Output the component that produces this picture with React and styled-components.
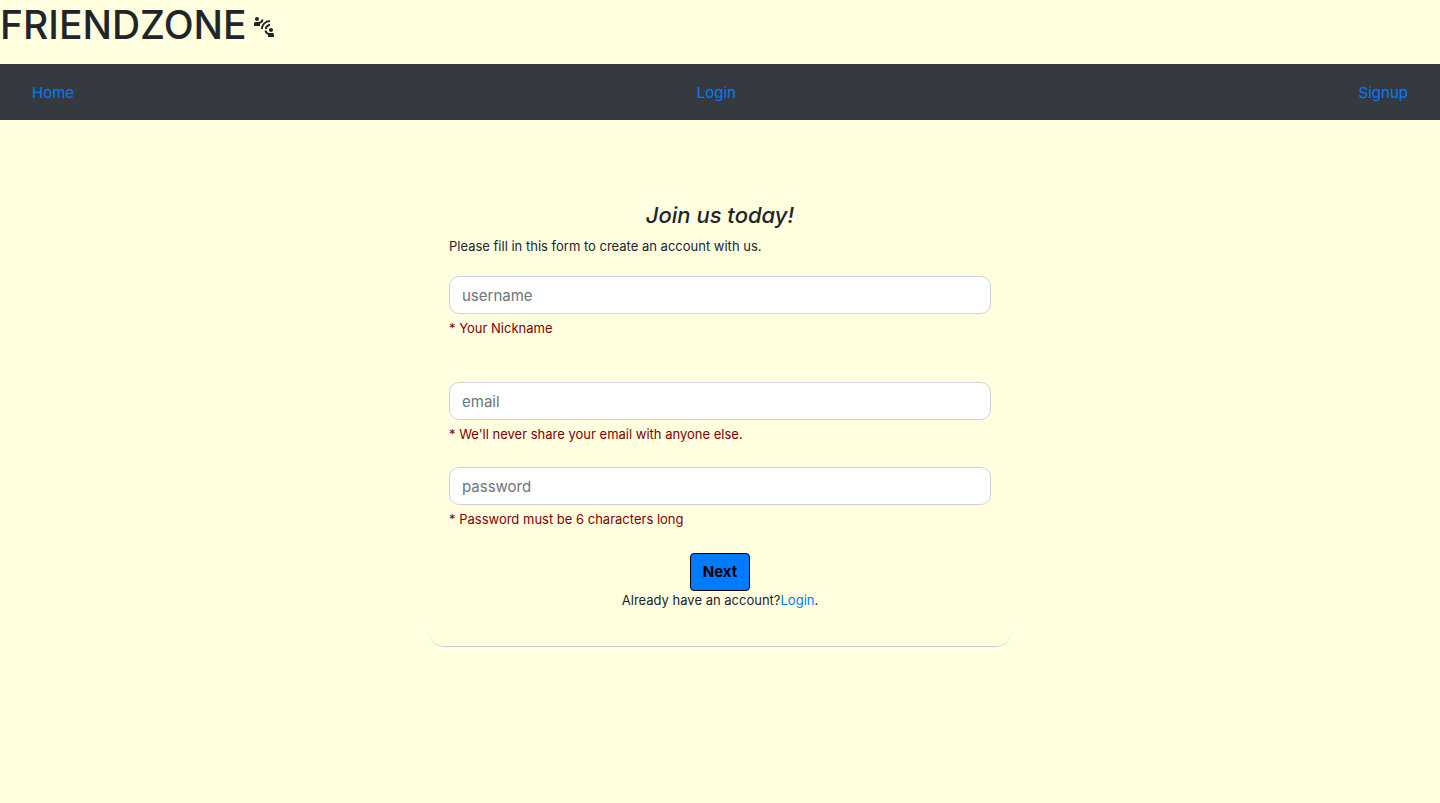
import React from "react";
import styled, { createGlobalStyle } from "styled-components";
import { MdConnectWithoutContact } from "react-icons/md";

const GlobalStyle = createGlobalStyle`
  *, *::before, *::after { box-sizing: border-box; }
  body {
    margin: 0;
    background: #ffffe0;
    color: #212529;
    font-family: Inter, "Liberation Sans", sans-serif;
    font-size: 15px;
    line-height: 24px;
  }
`;

const Brand = styled.h1`
  display: flex;
  align-items: center;
  gap: 5px;
  margin: 0 0 14px;
  font-size: 39px;
  font-weight: 500;
  line-height: 50px;
`;

const BrandIcon = styled(MdConnectWithoutContact)`
  width: 24px;
  height: 24px;
  margin-top: 4px;
`;

const Nav = styled.nav`
  display: flex;
  align-items: center;
  justify-content: space-between;
  padding: 17px 32px 15px;
  background: #343a40;
`;

const TextLink = styled.a`
  color: #007bff;
  text-decoration: none;
  &:hover { text-decoration: underline; }
`;

const Card = styled.form`
  max-width: 582px;
  margin: 40px auto;
  padding: 41px 20px 36px;
  border-bottom: 1px solid #c8c8d0;
  border-radius: 15px;
`;

const Title = styled.h2`
  margin: 0 0 6px;
  font-size: 22px;
  font-style: italic;
  font-weight: 500;
  line-height: 29px;
  text-align: center;
`;

const Intro = styled.p`
  margin: 0 0 20px;
  font-size: 13px;
  line-height: 20px;
`;

const Field = styled.div`
  display: flex;
  flex-direction: column;
  gap: 4px;
  margin-bottom: ${({ $gap }) => $gap}px;
`;

const Input = styled.input`
  width: 100%;
  height: 38px;
  padding: 6px 12px;
  border: 1px solid #ced4da;
  border-radius: 10px;
  background: #fff;
  color: #495057;
  font: inherit;
  &::placeholder { color: #6c757d; opacity: 1; }
`;

const Hint = styled.small`
  color: #800000;
  font-size: 13px;
  line-height: 20px;
`;

const Footer = styled.div`
  display: flex;
  flex-direction: column;
  align-items: center;
`;

const Submit = styled.button`
  height: 38px;
  padding: 6px 12px;
  border: 1px solid #000;
  border-radius: 4px;
  background: #007bff;
  color: #000;
  font: inherit;
  font-weight: 700;
  cursor: pointer;
`;

const Account = styled.p`
  margin: 0;
  font-size: 13px;
  line-height: 19px;
`;

const FIELDS = [
  { name: "username", type: "text", hint: "* Your Nickname", gap: 44 },
  { name: "email", type: "email", hint: "* We'll never share your email with anyone else.", gap: 23 },
  { name: "password", type: "password", hint: "* Password must be 6 characters long", gap: 24 },
];

export default function App() {
  return (
    <>
      <GlobalStyle />
      <header>
        <Brand>
          FRIENDZONE <BrandIcon aria-hidden="true" />
        </Brand>
        <Nav>
          <TextLink href="#home">Home</TextLink>
          <TextLink href="#login">Login</TextLink>
          <TextLink href="#signup">Signup</TextLink>
        </Nav>
      </header>
      <main>
        <Card onSubmit={(event) => event.preventDefault()}>
          <Title>Join us today!</Title>
          <Intro>Please fill in this form to create an account with us.</Intro>
          {FIELDS.map(({ name, type, hint, gap }) => (
            <Field key={name} $gap={gap}>
              <Input
                id={name}
                name={name}
                type={type}
                placeholder={name}
                aria-label={name}
                aria-describedby={`${name}-hint`}
              />
              <Hint id={`${name}-hint`}>{hint}</Hint>
            </Field>
          ))}
          <Footer>
            <Submit type="submit">Next</Submit>
            <Account>
              Already have an account?<TextLink href="#login">Login</TextLink>.
            </Account>
          </Footer>
        </Card>
      </main>
    </>
  );
}
